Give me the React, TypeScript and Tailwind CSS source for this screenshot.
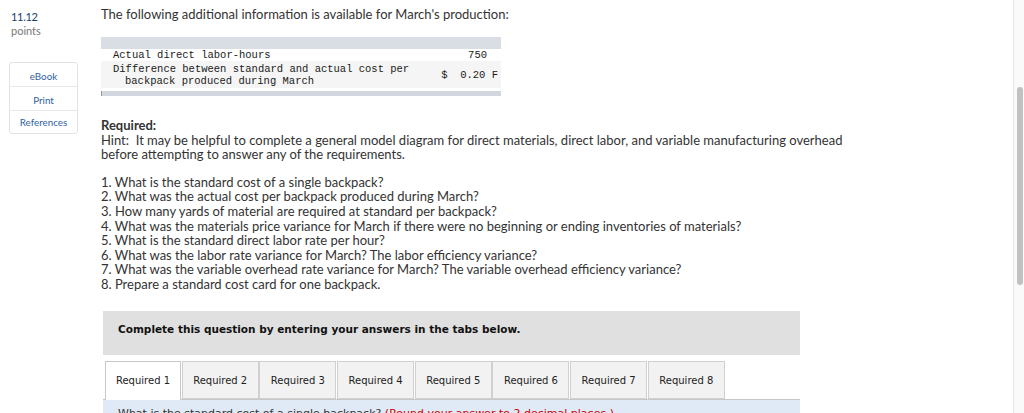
import React from 'react';

const questions = [
  '1. What is the standard cost of a single backpack?',
  '2. What was the actual cost per backpack produced during March?',
  '3. How many yards of material are required at standard per backpack?',
  '4. What was the materials price variance for March if there were no beginning or ending inventories of materials?',
  '5. What is the standard direct labor rate per hour?',
  '6. What was the labor rate variance for March? The labor efficiency variance?',
  '7. What was the variable overhead rate variance for March? The variable overhead efficiency variance?',
  '8. Prepare a standard cost card for one backpack.',
];

const tabs = ['Required 1', 'Required 2', 'Required 3', 'Required 4', 'Required 5', 'Required 6', 'Required 7', 'Required 8'];

function Sidebar() {
  return (
    <aside className="w-[101px] shrink-0 pl-[9px] pt-[10px]">
      <div className="pl-[2px] text-[11px] leading-[13px] text-[#1a3d6d] tracking-[-0.3px]">11.12</div>
      <div className="pl-[2px] text-[11px] leading-[15px] text-[#777]">points</div>
      <div className="mt-[24px] w-[69px] rounded-[3px] border border-[#e3e3e3] text-center text-[9.8px] text-[#2f5f9f]">
        <div className="h-[24px] pt-[1px] leading-[24px] border-b border-[#e8e8e8]">eBook</div>
        <div className="h-[24px] pt-[1px] leading-[24px] border-b border-[#e8e8e8]">Print</div>
        <div className="h-[22px] leading-[22px]">References</div>
      </div>
    </aside>
  );
}

function InfoTable() {
  return (
    <div className="mt-[15px] w-[400px] font-['Liberation_Mono',monospace] text-[10.5px] text-[#1a1a1a]">
      <div className="h-[12px] bg-[#d9dde4]" />
      <div className="flex h-[12px] items-center leading-[12px]">
        <div className="flex-1 pl-[12px]">Actual direct labor-hours</div>
        <div className="w-[80px] pr-[14px] text-right">750</div>
      </div>
      <div className="flex h-[27px] items-center bg-[#f5f5f5] leading-[12px]">
        <div className="flex-1 pl-[12px]">
          Difference between standard and actual cost per
          <div className="pl-[12px]">backpack produced during March</div>
        </div>
        <div className="w-[80px] pr-[3px] text-right">$&nbsp;&nbsp;0.20 F</div>
      </div>
      <div className="mt-[3px] h-[5px] border-l border-[#999] bg-[#d2d6dd]" />
    </div>
  );
}

function Tabs() {
  return (
    <div className="ml-[2px] mt-[6px] w-[697px] font-['DejaVu_Sans',Verdana,sans-serif] text-[10px] text-[#222]">
      <div className="flex gap-[0.7px] pl-[2px]">
        {tabs.map((t, i) => (
          <div
            key={t}
            className={
              i === 0
                ? 'relative z-10 -mb-px h-[39px] w-[76px] border border-b-0 border-[#c8c8c8] bg-white text-center leading-[38px]'
                : 'h-[38px] w-[77px] border border-[#d0d0d0] bg-[#f2f2f2] text-center leading-[38px]'
            }
          >
            {t}
          </div>
        ))}
      </div>
      <div className="h-[20px] border-t border-[#c8c8c8] bg-[#dfeaf6] pl-[15px] pt-[7px] text-[11px] leading-[14px] text-[#333]">
        What is the standard cost of a single backpack?{' '}
        <span className="text-[#c00]">(Round your answer to 2 decimal places.)</span>
      </div>
    </div>
  );
}

export default function App() {
  return (
    <div className="flex h-[413px] w-[1024px] overflow-hidden bg-white font-['Lato',sans-serif] text-[#333]">
      <Sidebar />
      <main className="flex-1 pt-[6px]">
        <p className="text-[13px] leading-[16px] text-[#333]">
          The following additional information is available for March's production:
        </p>
        <InfoTable />
        <div className="mt-[22px] text-[13px] leading-[14.6px] text-[#333]">
          <div className="font-bold">Required:</div>
          <div>
            Hint:&nbsp; It may be helpful to complete a general model diagram for direct materials, direct labor, and variable manufacturing overhead
          </div>
          <div>before attempting to answer any of the requirements.</div>
          <div className="mt-[13px]">
            {questions.map((q) => (
              <div key={q}>{q}</div>
            ))}
          </div>
        </div>
        <div className="ml-[2px] mt-[19px] h-[44px] w-[697px] bg-[#e0e0e0] pl-[15px] pt-[12px] font-['DejaVu_Sans',Verdana,sans-serif] text-[10.5px] font-bold leading-[13px] text-[#111]">
          Complete this question by entering your answers in the tabs below.
        </div>
        <Tabs />
      </main>
      <div className="relative w-[11px] shrink-0 border-l border-[#e6e6e6] bg-[#fafafa]">
        <div className="absolute left-[3px] top-[87px] h-[198px] w-[6px] rounded-full bg-[#c1c1c1]" />
      </div>
    </div>
  );
}
